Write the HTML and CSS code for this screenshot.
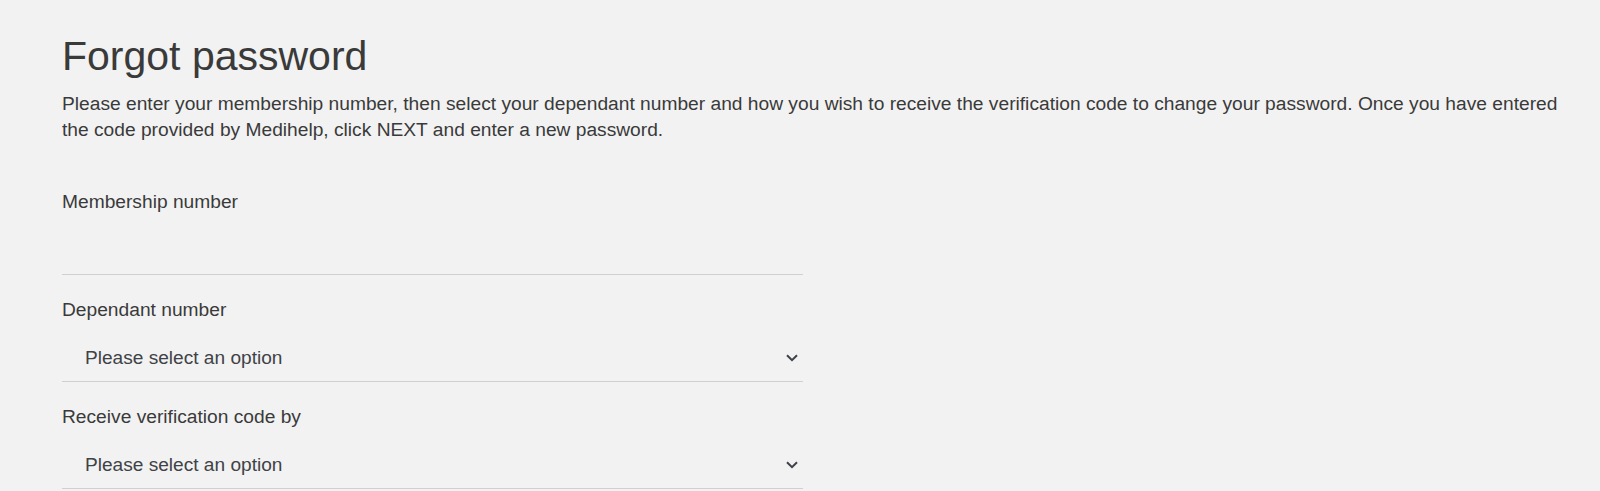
FILE: index.html
```html
<!DOCTYPE html>
<html lang="en">
<head>
<meta charset="utf-8">
<title>Forgot password</title>
<link rel="stylesheet" href="styles.css">
</head>
<body>
<main class="page">
  <h1 class="title">Forgot password</h1>
  <p class="intro">Please enter your membership number, then select your dependant number and how you wish to receive the verification code to change your password. Once you have entered the code provided by Medihelp, click NEXT and enter a new password.</p>
  <form class="form">
    <div class="field">
      <label class="label" for="member">Membership number</label>
      <input class="input" id="member" type="text">
    </div>
    <div class="field">
      <label class="label">Dependant number</label>
      <div class="select">
        <span class="select-text">Please select an option</span>
        <svg class="chevron" width="12" height="8" viewBox="0 0 12 8"><path d="M1 1.2 L6 6.2 L11 1.2" fill="none" stroke="#3d4148" stroke-width="2"/></svg>
      </div>
    </div>
    <div class="field">
      <label class="label">Receive verification code by</label>
      <div class="select">
        <span class="select-text">Please select an option</span>
        <svg class="chevron" width="12" height="8" viewBox="0 0 12 8"><path d="M1 1.2 L6 6.2 L11 1.2" fill="none" stroke="#3d4148" stroke-width="2"/></svg>
      </div>
    </div>
  </form>
</main>
</body>
</html>
```

FILE: styles.css
```css
html, body {
  margin: 0;
  padding: 0;
  background: #f2f2f2;
}
body {
  font-family: "Liberation Sans", Arial, sans-serif;
  color: #3a3a3a;
}
.page {
  padding: 32px 25px 0 62px;
}
.title {
  margin: 0;
  font-size: 41px;
  font-weight: 400;
  line-height: 48px;
  color: #3a3a3a;
}
.intro {
  margin: 10.5px 0 0 0;
  font-size: 19.2px;
  line-height: 26.3px;
}
.form {
  width: 741px;
  margin-top: 47.4px;
}
.field {
  display: flex;
  flex-direction: column;
  margin-bottom: 22.6px;
}
.label {
  font-size: 19.2px;
  line-height: 24px;
}
.input {
  box-sizing: border-box;
  height: 60.6px;
  border: none;
  border-bottom: 1px solid #d0d0d0;
  background: transparent;
  padding: 0 23px;
  margin: 0;
  font: inherit;
  font-size: 19px;
  outline: none;
}
.select {
  box-sizing: border-box;
  height: 60.6px;
  padding: 24.6px 5px 0 23px;
  display: flex;
  align-items: flex-start;
  justify-content: space-between;
  border-bottom: 1px solid #d0d0d0;
}
.select-text {
  font-size: 19.1px;
  line-height: 24px;
  color: #3f4247;
}
.chevron {
  display: block;
  margin-top: 8px;
}
```
